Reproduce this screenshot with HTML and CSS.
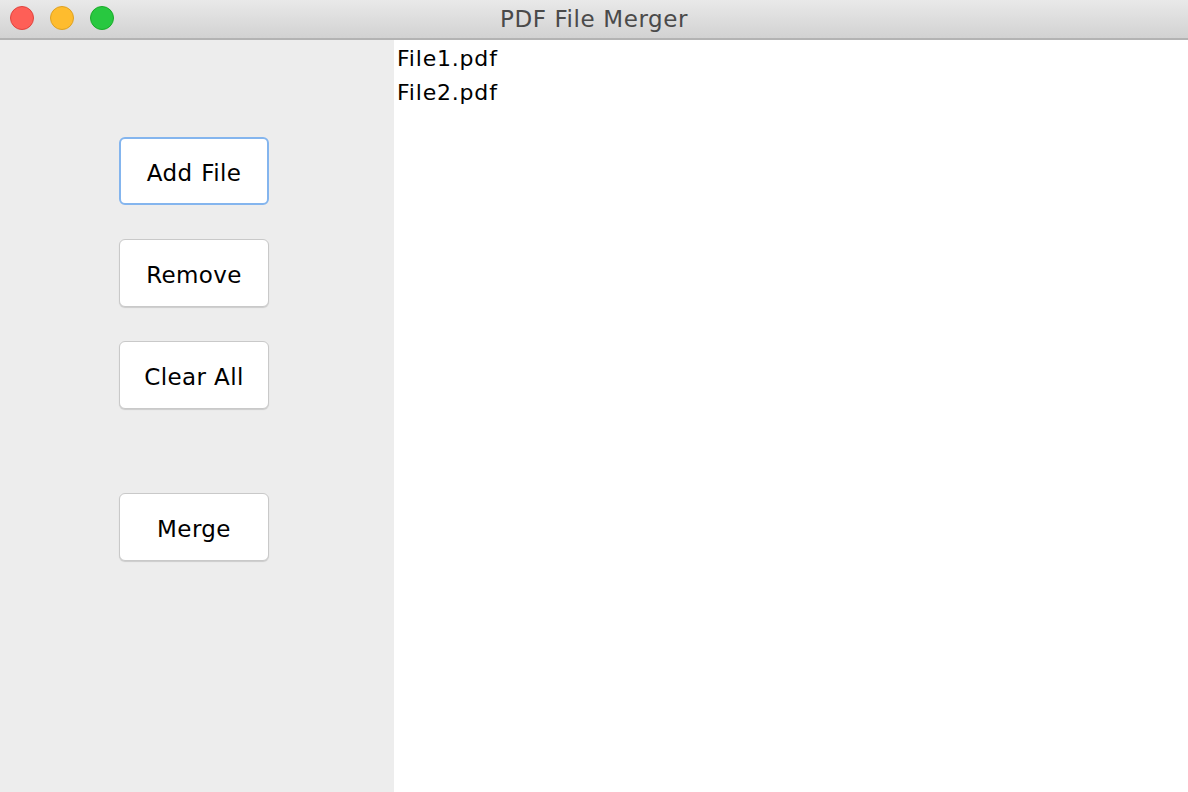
FILE: index.html
```html
<!DOCTYPE html>
<html>
<head>
<meta charset="utf-8">
<title>PDF File Merger</title>
<link rel="stylesheet" href="styles.css">
</head>
<body>
<div class="window">
  <div class="titlebar">
    <div class="lights">
      <span class="light red"></span>
      <span class="light yellow"></span>
      <span class="light green"></span>
    </div>
    <div class="title">PDF File Merger</div>
  </div>
  <div class="content">
    <div class="sidebar">
      <button class="btn focused">Add File</button>
      <button class="btn">Remove</button>
      <button class="btn">Clear All</button>
      <button class="btn merge">Merge</button>
    </div>
    <ul class="filelist">
      <li>File1.pdf</li>
      <li>File2.pdf</li>
    </ul>
  </div>
</div>
</body>
</html>
```

FILE: styles.css
```css
* { box-sizing: border-box; }
html, body {
  margin: 0;
  padding: 0;
  width: 1188px;
  height: 792px;
  overflow: hidden;
  font-family: "DejaVu Sans", "Liberation Sans", sans-serif;
}
.window {
  display: flex;
  flex-direction: column;
  width: 1188px;
  height: 792px;
}
.titlebar {
  position: relative;
  height: 40px;
  flex: none;
  background: linear-gradient(#e9e9e9, #d2d2d2);
  border-bottom: 2px solid #b3b3b3;
  display: flex;
  align-items: center;
  justify-content: center;
}
.lights {
  position: absolute;
  left: 10px;
  top: 6px;
  display: flex;
  gap: 16px;
}
.light {
  width: 24px;
  height: 24px;
  border-radius: 50%;
  display: block;
}
.red { background: #fe5f57; border: 1px solid #e0443e; }
.yellow { background: #febc2e; border: 1px solid #dea123; }
.green { background: #28c840; border: 1px solid #1aab29; }
.title {
  font-size: 23px;
  color: #4a4a4a;
  letter-spacing: 0.6px;
  margin-top: -1px;
}
.content {
  flex: 1;
  display: flex;
}
.sidebar {
  width: 394px;
  flex: none;
  background: #ededed;
  display: flex;
  flex-direction: column;
  align-items: flex-start;
  padding: 97px 0 0 119px;
  gap: 34px;
}
.btn {
  width: 150px;
  height: 68px;
  background: #ffffff;
  border: 1px solid #c9c9c9;
  border-radius: 6px;
  box-shadow: 0 1px 1px rgba(0,0,0,0.14);
  font-family: "DejaVu Sans", "Liberation Sans", sans-serif;
  font-size: 23px;
  letter-spacing: 0.4px;
  color: #000;
  padding: 3px 0 0 0;
  margin: 0;
}
.btn.focused {
  border: 2px solid #84b5ee;
  box-shadow: none;
  word-spacing: 1px;
}
.btn.merge {
  margin-top: 50px;
}
.filelist {
  flex: 1;
  list-style: none;
  margin: 0;
  padding: 2px 0 0 3px;
  background: #ffffff;
  font-size: 22px;
  line-height: 33.5px;
  letter-spacing: 0.8px;
  color: #000;
}
```
